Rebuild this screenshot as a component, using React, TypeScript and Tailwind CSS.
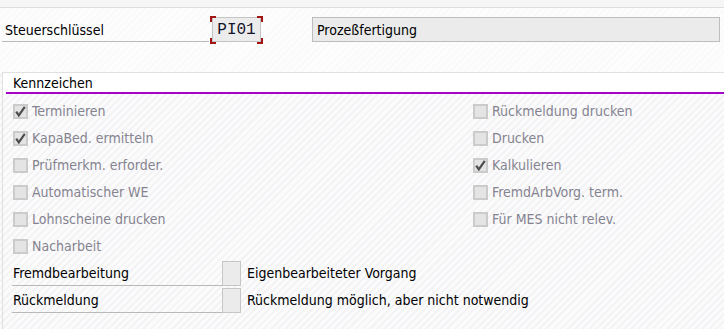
const stripes =
  "bg-[repeating-linear-gradient(135deg,#fbfbfc_0px,#fbfbfc_3px,#f3f3f6_3px,#f3f3f6_5px)]";

function Check({ checked }: { checked?: boolean }) {
  return (
    <span className="w-[15px] h-[15px] shrink-0 bg-[#e4e4e4] border-2 border-[#cbcbcb] flex items-center justify-center">
      {checked && (
        <svg width="11" height="11" viewBox="0 0 11 11">
          <path d="M1.2 5.6 L3.8 9.4 L9.8 0.8" stroke="#4d4d4d" strokeWidth="2.2" fill="none" />
        </svg>
      )}
    </span>
  );
}

function CheckRow({ label, checked }: { label: string; checked?: boolean }) {
  return (
    <div className="h-[27px] flex items-center gap-[4px]">
      <Check checked={checked} />
      <span className="text-[#85838f] leading-none pb-[1px]">{label}</span>
    </div>
  );
}

function Corner({ pos }: { pos: string }) {
  return <span className={`absolute w-[6px] h-[6px] border-[#a31515] ${pos}`} />;
}

export default function App() {
  const left = [
    { label: "Terminieren", checked: true },
    { label: "KapaBed. ermitteln", checked: true },
    { label: "Prüfmerkm. erforder." },
    { label: "Automatischer WE" },
    { label: "Lohnscheine drucken" },
    { label: "Nacharbeit" },
  ];
  const right = [
    { label: "Rückmeldung drucken" },
    { label: "Drucken" },
    { label: "Kalkulieren", checked: true },
    { label: "FremdArbVorg. term." },
    { label: "Für MES nicht relev." },
  ];

  return (
    <div
      className={`w-[724px] h-[329px] overflow-hidden text-[14px] text-black ${stripes}`}
      style={{ fontFamily: "'DejaVu Sans Condensed', Tahoma, sans-serif", fontStretch: "condensed" }}
    >
      <div className="h-[8px] bg-[#f6f6f6] border-b border-[#dedede]" />

      {/* Steuerschlüssel row */}
      <div className="h-[64px] pt-[9px] bg-white/60">
        <div className="flex items-stretch h-[25px]">
          <div className="ml-[2px] w-[207px] pl-[3px] border-b border-[#b9b9b9] flex items-center pt-[2px]">
            Steuerschlüssel
          </div>
          <div className="relative ml-[3px] w-[49px] h-[25px] bg-[#ececec] border border-[#c4c4c4] flex items-center justify-center">
            <span
              className="text-[16px] text-[#14142a] leading-none pt-[1px]"
              style={{ fontFamily: "'Liberation Mono', 'Courier New', monospace" }}
            >
              PI01
            </span>
            <Corner pos="-left-[3px] -top-[2px] border-l-2 border-t-2" />
            <Corner pos="-right-[3px] -top-[2px] border-r-2 border-t-2" />
            <Corner pos="-left-[3px] -bottom-[3px] border-l-2 border-b-2" />
            <Corner pos="-right-[3px] -bottom-[3px] border-r-2 border-b-2" />
          </div>
          <div className="ml-[51px] w-[408px] h-[25px] bg-[#ebebeb] border border-[#bdbdbd] flex items-center pl-[4px] pt-[1px]">
            Prozeßfertigung
          </div>
        </div>
      </div>

      {/* Kennzeichen frame */}
      <div className="ml-[2px] border-l border-t border-[#e0e0e0] h-[300px]">
        <div className="bg-white pl-[3px] h-[21px]">
          <div className="h-full border-b-2 border-[#a404c8] pl-[7px] flex items-center pt-[1px]">
            Kennzeichen
          </div>
        </div>

        <div className="flex pt-[4px]">
          <div className="w-[470px] pl-[10px]">
            {left.map((c) => (
              <CheckRow key={c.label} label={c.label} checked={c.checked} />
            ))}
          </div>
          <div className="flex-1">
            {right.map((c) => (
              <CheckRow key={c.label} label={c.label} checked={c.checked} />
            ))}
          </div>
        </div>

        <div className="mt-[1px] flex flex-col gap-[2px]">
          <div className="flex h-[25px]">
            <div className="ml-[9px] w-[210px] pl-[1px] border-b border-[#b9b9b9] flex items-center">
              Fremdbearbeitung
            </div>
            <div className="w-[19px] bg-[#ebebeb] border border-[#c6c6c6]" />
            <div className="ml-[6px] flex items-center">Eigenbearbeiteter Vorgang</div>
          </div>
          <div className="flex h-[25px]">
            <div className="ml-[9px] w-[210px] pl-[1px] border-b border-[#b9b9b9] flex items-center">
              Rückmeldung
            </div>
            <div className="w-[19px] bg-[#ebebeb] border border-[#c6c6c6]" />
            <div className="ml-[6px] flex items-center">
              Rückmeldung möglich, aber nicht notwendig
            </div>
          </div>
        </div>
      </div>
    </div>
  );
}
